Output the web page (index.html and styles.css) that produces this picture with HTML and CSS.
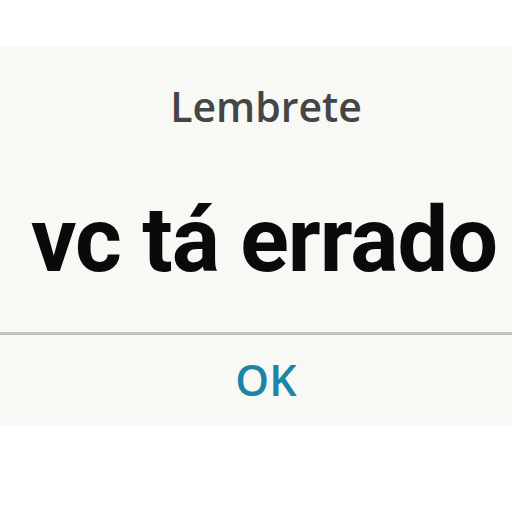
FILE: index.html
```html
<!DOCTYPE html>
<html>
<head>
<meta charset="utf-8">
<link rel="stylesheet" href="styles.css">
</head>
<body>
<div class="dialog">
  <div class="content">
    <div class="title">Lembrete</div>
    <div class="message">vc tá errado</div>
  </div>
  <div class="divider"></div>
  <div class="actions">
    <div class="ok">OK</div>
  </div>
</div>
</body>
</html>
```
FILE: styles.css
```css
html, body {
  margin: 0;
  padding: 0;
  background: #ffffff;
  width: 512px;
  height: 512px;
  overflow: hidden;
}
.dialog {
  margin-top: 48px;
  background: #f8f8f5;
  display: flex;
  flex-direction: column;
  box-shadow: 0 -1px 2px rgba(0,0,0,0.04), 0 1px 2px rgba(0,0,0,0.04);
}
.content {
  height: 284px;
  display: flex;
  flex-direction: column;
  align-items: center;
}
.title {
  margin-top: 38px;
  margin-left: 20px;
  font-family: "Open Sans", sans-serif;
  font-weight: 600;
  font-size: 41px;
  color: #454545;
  line-height: 1;
}
.message {
  margin-top: 69px;
  margin-left: 16px;
  font-family: "Roboto", sans-serif;
  font-weight: 700;
  font-size: 90px;
  line-height: 1;
  color: #0a0a0a;
  letter-spacing: -1px;
}
.divider {
  height: 3px;
  background: #c2c2c0;
}
.actions {
  height: 89px;
  display: flex;
  justify-content: center;
  align-items: center;
}
.ok {
  margin-left: 20px;
  font-family: "Open Sans", sans-serif;
  font-weight: 600;
  font-size: 43px;
  color: #1a85a7;
  line-height: 1;
}
```
